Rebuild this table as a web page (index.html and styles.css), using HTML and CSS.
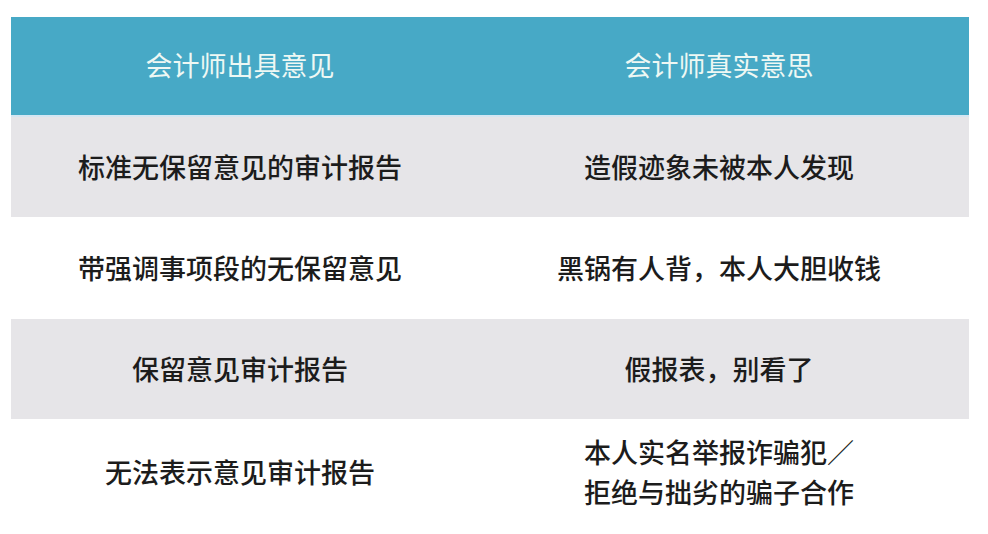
FILE: index.html
```html
<!DOCTYPE html>
<html lang="zh-CN">
<head>
<meta charset="utf-8">
<title>会计师意见</title>
<link rel="stylesheet" href="styles.css">
</head>
<body>
<div class="table">
  <div class="row head">
    <div class="cell left">会计师出具意见</div>
    <div class="cell right">会计师真实意思</div>
  </div>
  <div class="row gray">
    <div class="cell left">标准无保留意见的审计报告</div>
    <div class="cell right">造假迹象未被本人发现</div>
  </div>
  <div class="row white r2">
    <div class="cell left">带强调事项段的无保留意见</div>
    <div class="cell right">黑锅有人背，本人大胆收钱</div>
  </div>
  <div class="row gray">
    <div class="cell left">保留意见审计报告</div>
    <div class="cell right">假报表，别看了</div>
  </div>
  <div class="row white r4">
    <div class="cell left">无法表示意见审计报告</div>
    <div class="cell right two">本人实名举报诈骗犯／<br>拒绝与拙劣的骗子合作</div>
  </div>
</div>
</body>
</html>
```

FILE: styles.css
```css
html, body {
  margin: 0;
  padding: 0;
  background: #ffffff;
}
body {
  font-family: "Noto Sans CJK SC", "Noto Sans", sans-serif;
}
.table {
  margin: 17px 0 0 11px;
  width: 958px;
  display: flex;
  flex-direction: column;
}
.row {
  display: grid;
  grid-template-columns: 458px 500px;
  height: 100px;
}
.cell {
  display: flex;
  align-items: center;
  justify-content: center;
  text-align: center;
  font-size: 27px;
  line-height: 40px;
  color: #1c1c1c;
  font-weight: 500;
}
.head {
  background: #47a9c6;
  border-bottom: 2px solid #d4e6f2;
  height: 100px;
  box-sizing: border-box;
}
.head .cell {
  color: #eef8f4;
  font-weight: 400;
  padding-bottom: 2px;
}
.gray {
  background: #e6e5e8;
}
.white {
  background: #ffffff;
}
.r2 {
  height: 102px;
}
.r4 {
  height: 106px;
}
.two {
  line-height: 40px;
}
```
